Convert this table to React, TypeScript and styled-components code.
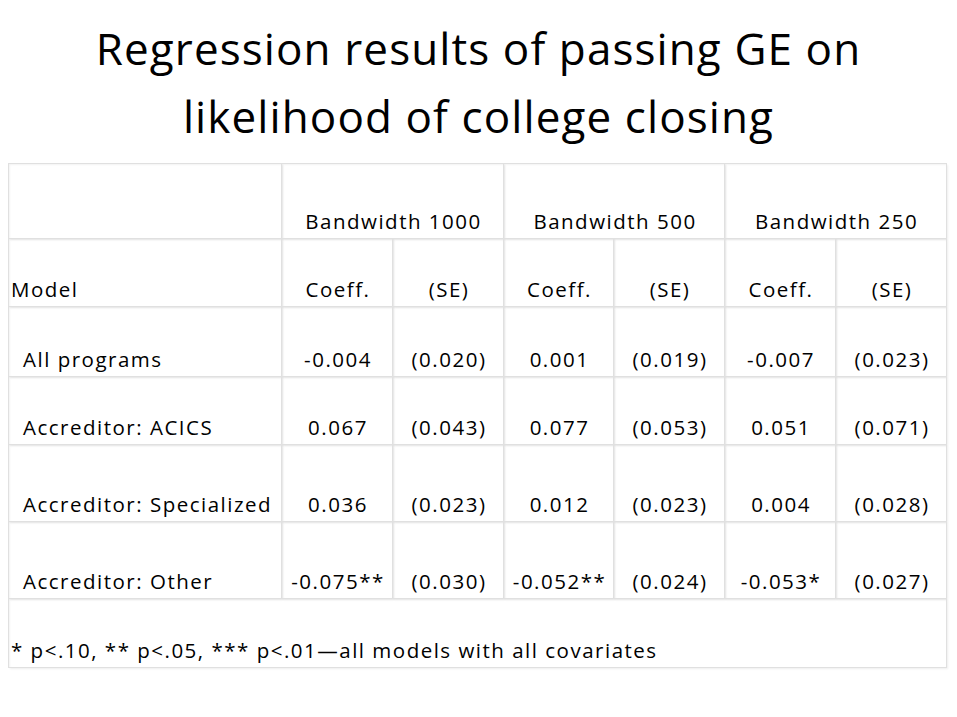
import React from "react";
import styled, { createGlobalStyle } from "styled-components";

const GlobalStyle = createGlobalStyle`
  html, body {
    margin: 0;
    padding: 0;
    background: #ffffff;
  }
  body {
    font-family: "Open Sans", Lato, sans-serif;
    color: #000;
  }
`;

type Row = {
  label: string;
  values: string[];
  height: number;
};

const columns = [273, 111, 111, 110, 111, 111, 111];

const rows: Row[] = [
  { label: "All programs", values: ["-0.004", "(0.020)", "0.001", "(0.019)", "-0.007", "(0.023)"], height: 70 },
  { label: "Accreditor: ACICS", values: ["0.067", "(0.043)", "0.077", "(0.053)", "0.051", "(0.071)"], height: 68 },
  { label: "Accreditor: Specialized", values: ["0.036", "(0.023)", "0.012", "(0.023)", "0.004", "(0.028)"], height: 77 },
  { label: "Accreditor: Other", values: ["-0.075**", "(0.030)", "-0.052**", "(0.024)", "-0.053*", "(0.027)"], height: 77 },
];

const App = () => {
  return (
    <Slide>
      <GlobalStyle />
      <Title>
        Regression results of passing GE on
        <br />
        likelihood of college closing
      </Title>

      <Table>
        <colgroup>
          {columns.map((w, i) => (
            <col key={i} style={{ width: w }} />
          ))}
        </colgroup>
        <tbody>
          <TableRow $height={75}>
            <Cell />
            <Cell colSpan={2} $align="center">Bandwidth 1000</Cell>
            <Cell colSpan={2} $align="center">Bandwidth 500</Cell>
            <Cell colSpan={2} $align="center">Bandwidth 250</Cell>
          </TableRow>
          <TableRow $height={68}>
            <Cell>Model</Cell>
            {["Coeff.", "(SE)", "Coeff.", "(SE)", "Coeff.", "(SE)"].map((h, i) => (
              <Cell key={i} $align="center">
                {h}
              </Cell>
            ))}
          </TableRow>
          {rows.map((row) => (
            <TableRow key={row.label} $height={row.height}>
              <Cell $indent>{row.label}</Cell>
              {row.values.map((v, i) => (
                <Cell key={i} $align="center">
                  {v}
                </Cell>
              ))}
            </TableRow>
          ))}
          <TableRow $height={69}>
            <Cell colSpan={7}>* p&lt;.10, ** p&lt;.05, *** p&lt;.01—all models with all covariates</Cell>
          </TableRow>
        </tbody>
      </Table>
    </Slide>
  );
};

const Slide = styled.div`
  width: 957px;
  height: 717px;
  display: flex;
  flex-direction: column;
  align-items: flex-start;
  overflow: hidden;
`;

const Title = styled.h1`
  align-self: stretch;
  margin: 0;
  padding-top: 14px;
  height: 142px;
  box-sizing: border-box;
  text-align: center;
  font-family: "Open Sans", Lato, sans-serif;
  font-weight: 400;
  font-size: 44px;
  line-height: 68px;
  letter-spacing: 1.1px;
`;

const Table = styled.table`
  margin: 21px 0 0 8px;
  width: 938px;
  border-collapse: collapse;
  table-layout: fixed;
`;

const TableRow = styled.tr<{ $height: number }>`
  height: ${(p) => p.$height}px;
`;

const Cell = styled.td<{ $align?: "left" | "center"; $indent?: boolean }>`
  padding: 0 0 6px ${(p) => (p.$indent ? "14px" : "2px")};
  ${(p) => p.$align === "center" && "padding-left: 2px;"}
  text-align: ${(p) => p.$align ?? "left"};
  vertical-align: bottom;
  white-space: nowrap;
  font-size: 20.5px;
  line-height: 22px;
  letter-spacing: 1.5px;
  border: 1px solid #e0e0e0;
  box-shadow: 1px 1px 2px rgba(0, 0, 0, 0.07), inset 1px 1px 2px rgba(0, 0, 0, 0.05);
`;

export default App;
